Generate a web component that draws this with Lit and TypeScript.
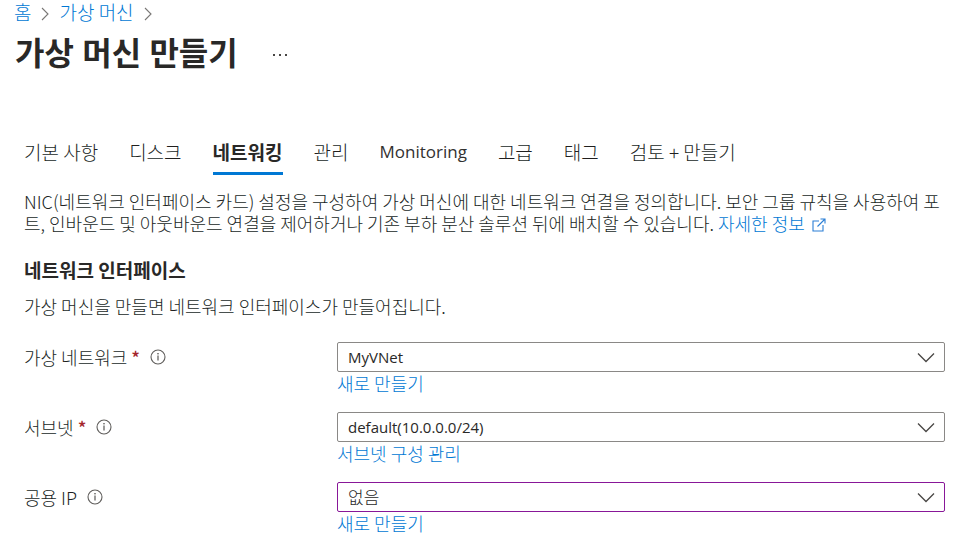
import { LitElement, html, css, svg, nothing } from "lit";
import { customElement, property } from "lit/decorators.js";

const chevron = html`<svg class="sep" viewBox="0 0 8 14" aria-hidden="true">
  <path d="M1 1 L7 7 L1 13" fill="none" stroke="#797775" stroke-width="1.1" />
</svg>`;

@customElement("info-icon")
class InfoIcon extends LitElement {
  static styles = css`
    :host { display: block; width: 16px; height: 16px; }
    svg { display: block; width: 16px; height: 16px; }
  `;
  render() {
    return html`<svg viewBox="0 0 16 16" role="img" aria-label="정보">
      ${svg`<circle cx="8" cy="8" r="7" fill="none" stroke="#605e5c" stroke-width="1.1" />
      <path d="M8 6.5 V11.5" stroke="#484644" stroke-width="1.1" />
      <circle cx="8" cy="4.7" r="0.8" fill="#484644" />`}
    </svg>`;
  }
}

@customElement("form-row")
class FormRow extends LitElement {
  @property() label = "";
  @property() value = "";
  @property() action = "";
  @property({ type: Boolean }) required = false;
  @property({ type: Boolean }) edited = false;

  static styles = css`
    :host {
      display: grid;
      grid-template-columns: 313px minmax(0, 1fr);
      align-items: start;
    }
    .caption { display: flex; align-items: center; height: 30px; }
    .star { color: #a4262c; margin-left: 4px; font-weight: 500; }
    .info { margin-left: 10px; }
    .box { position: relative; }
    select {
      appearance: none;
      display: block;
      box-sizing: border-box;
      width: 100%;
      height: 30px;
      margin: 0;
      padding: 0 36px 0 10px;
      border: 1px solid #8a8886;
      border-radius: 2px;
      background: #fff;
      color: #292827;
      font-family: "Open Sans", "Noto Sans CJK KR", sans-serif;
      font-size: 15px;
      outline: none;
    }
    .edited { border-color: #881798; font-size: 17px; font-weight: 300; }
    .arrow {
      position: absolute;
      right: 10px;
      top: 10px;
      width: 18px;
      height: 11px;
      pointer-events: none;
    }
    a { display: block; width: max-content; color: #0078d4; text-decoration: none; line-height: 23px; }
  `;

  render() {
    return html`
      <div class="caption">
        <label for="field">${this.label}</label>
        ${this.required ? html`<span class="star">*</span>` : nothing}
        <info-icon class="info"></info-icon>
      </div>
      <div>
        <div class="box">
          <select id="field" class=${this.edited ? "edited" : ""}>
            <option>${this.value}</option>
          </select>
          <svg class="arrow" viewBox="0 0 18 11" aria-hidden="true">
            <path d="M1 1.5 L9 9.5 L17 1.5" fill="none" stroke="#484644" stroke-width="1.3" />
          </svg>
        </div>
        <a href="#">${this.action}</a>
      </div>
    `;
  }
}

@customElement("app-root")
class AppRoot extends LitElement {
  static styles = css`
    :host {
      display: block;
      background: #fff;
      color: #201f1e;
      font-family: "Noto Sans CJK KR", sans-serif;
      font-size: 18px;
      font-weight: 300;
      line-height: 22px;
    }
    a { color: #0078d4; text-decoration: none; }
    h1, h2, p { margin: 0; }
    .crumbs { display: flex; align-items: center; gap: 10px; height: 24px; padding: 0 14px; font-size: 19px; }
    .crumbs a { line-height: 24px; }
    .sep { width: 8px; height: 14px; margin-top: 4px; }
    .head { display: flex; align-items: center; gap: 34px; height: 58px; padding: 0 15px; }
    h1 {
      font-family: "Open Sans", "Noto Sans CJK KR", sans-serif;
      font-size: 32px;
      line-height: 40px;
      font-weight: 700;
      color: #292827;
    }
    .more { border: 0; padding: 0; background: none; height: 16px; }
    .more svg { display: block; width: 16px; height: 16px; }
    .tabs { display: flex; gap: 31px; margin-top: 55px; padding: 0 24px; font-size: 19px; }
    .tab {
      border: 0;
      border-bottom: 3px solid transparent;
      padding: 0 0 5px;
      background: none;
      color: inherit;
      font: inherit;
      line-height: 30px;
      white-space: nowrap;
    }
    .latin { font-family: "Open Sans", sans-serif; font-size: 17px; font-weight: 400; color: #323130; }
    .active { font-weight: 700; border-bottom-color: #0078d4; color: #292827; }
    .content { padding: 15px 25px 0 24px; }
    .ext { width: 14px; height: 14px; margin-left: 3px; vertical-align: -1px; }
    h2 { margin-top: 24px; font-size: 19px; line-height: 24px; font-weight: 700; color: #292827; }
    .note { margin-top: 13px; }
    .form { display: grid; gap: 17px; margin-top: 25px; }
  `;

  private tabClass(name: string) {
    if (name === "네트워킹") return "tab active";
    return /^[A-Za-z]+$/.test(name) ? "tab latin" : "tab";
  }

  render() {
    const tabs = ["기본 사항", "디스크", "네트워킹", "관리", "Monitoring", "고급", "태그", "검토 + 만들기"];
    return html`
      <nav class="crumbs">
        <a href="#">홈</a>${chevron}<a href="#">가상 머신</a>${chevron}
      </nav>
      <header class="head">
        <h1>가상 머신 만들기</h1>
        <button class="more" aria-label="더 보기">
          <svg viewBox="0 0 16 16">
            <path d="M1 9h2v2h-2z M7 9h2v2h-2z M13 9h2v2h-2z" fill="#484644" />
          </svg>
        </button>
      </header>
      <div class="tabs" role="tablist">
        ${tabs.map((t, i) => html`<button role="tab" aria-selected=${i === 2} class=${this.tabClass(t)}>${t}</button>`)}
      </div>
      <main class="content">
        <p>
          NIC(네트워크 인터페이스 카드) 설정을 구성하여 가상 머신에 대한 네트워크 연결을 정의합니다. 보안 그룹 규칙을 사용하여 포<br />트,
          인바운드 및 아웃바운드 연결을 제어하거나 기존 부하 분산 솔루션 뒤에 배치할 수 있습니다.
          <a href="#">자세한 정보
            <svg class="ext" viewBox="0 0 14 14" aria-hidden="true">
              <path d="M7 3 H1 V13 H11 V7 M8.5 1 H13 V5.5 M13 1 L5.5 8.5" fill="none" stroke="#2b7fd6" stroke-width="1.1" />
            </svg></a>
        </p>
        <h2>네트워크 인터페이스</h2>
        <p class="note">가상 머신을 만들면 네트워크 인터페이스가 만들어집니다.</p>
        <div class="form">
          <form-row label="가상 네트워크" required value="MyVNet" action="새로 만들기"></form-row>
          <form-row label="서브넷" required value="default(10.0.0.0/24)" action="서브넷 구성 관리"></form-row>
          <form-row label="공용 IP" edited value="없음" action="새로 만들기"></form-row>
        </div>
      </main>
    `;
  }
}
